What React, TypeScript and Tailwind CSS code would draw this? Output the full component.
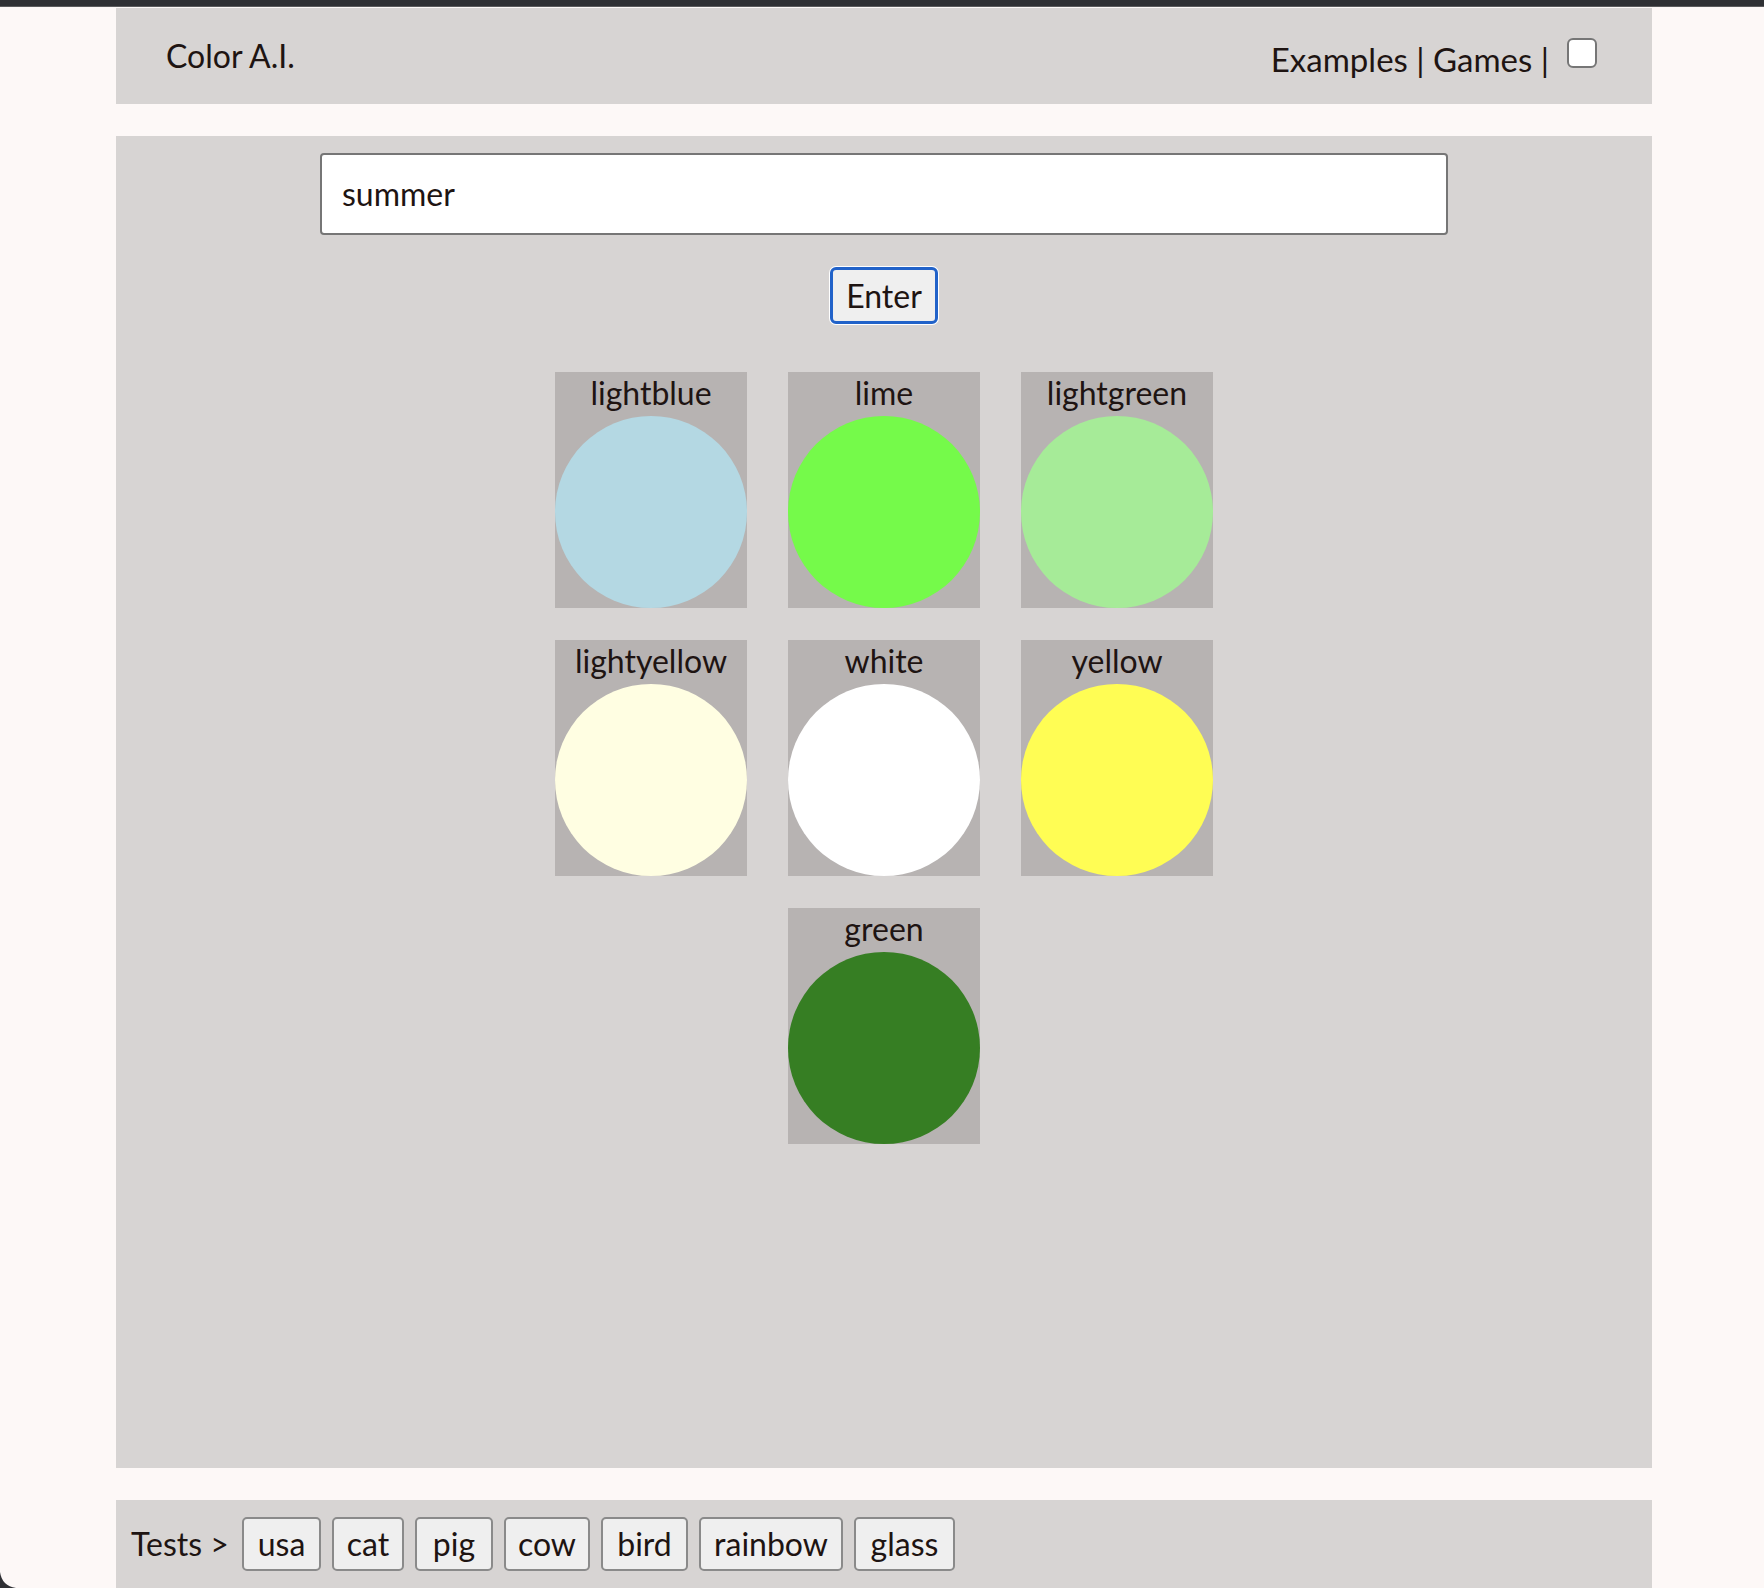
import React from "react";

const colors: { name: string; hex: string; col?: string }[] = [
  { name: "lightblue", hex: "#b4d8e3" },
  { name: "lime", hex: "#75fa4a" },
  { name: "lightgreen", hex: "#a6eb98" },
  { name: "lightyellow", hex: "#fffee2" },
  { name: "white", hex: "#ffffff" },
  { name: "yellow", hex: "#fffd54" },
  { name: "green", hex: "#367e23", col: "col-start-2" },
];

const tests: { label: string; w: string }[] = [
  { label: "usa", w: "w-[79px]" },
  { label: "cat", w: "w-[72px]" },
  { label: "pig", w: "w-[78px]" },
  { label: "cow", w: "w-[86px]" },
  { label: "bird", w: "w-[87px]" },
  { label: "rainbow", w: "w-[144px]" },
  { label: "glass", w: "w-[101px]" },
];

export default function App() {
  return (
    <div
      className="relative min-h-[1588px] w-full bg-[#fdf8f7] text-[#1e1412] text-[32px] leading-[38px]"
      style={{ fontFamily: "Lato, 'Liberation Sans', sans-serif" }}
    >
      <div className="h-[6px] w-full bg-[#2f3034]" />
      <div className="h-[1px] w-full bg-[#5b5b5d]" />
      <div className="h-[1px]" />

      <div className="ml-[116px] flex w-[1536px] flex-col">
        {/* Header */}
        <header className="flex h-[96px] items-start justify-between bg-[#d7d4d3]">
          <div className="pl-[50px] pt-[29px]">Color A.I.</div>
          <div className="flex items-start pr-[55px] pt-[30px]">
            <span className="pt-[2px] text-[33px]">Examples | Games |</span>
            <span className="ml-[18px] h-[30px] w-[30px] rounded-[6px] border-2 border-[#767676] bg-white" />
          </div>
        </header>

        {/* Main */}
        <main className="mt-[32px] flex h-[1332px] flex-col items-center bg-[#d7d4d3] pt-[17px]">
          <input
            readOnly
            value="summer"
            className="h-[82px] w-[1128px] rounded-[4px] border-2 border-[#767676] bg-white px-[20px] pb-[2px] text-[32px] text-[#1e1412] outline-none"
            style={{ fontFamily: "Lato, 'Liberation Sans', sans-serif" }}
          />
          <button className="mt-[32px] flex h-[57px] w-[108px] items-center justify-center rounded-[6px] border-[3px] border-[#2162c9] bg-[#efefef] text-[32px] shadow-[0_0_0_1px_#ffffff]">
            Enter
          </button>

          <div className="mt-[48px] grid grid-cols-[192px_192px_192px] gap-x-[41px] gap-y-[32px]">
            {colors.map((c) => (
              <div key={c.name} className={`flex h-[236px] w-[192px] flex-col items-center bg-[#b7b3b2] ${c.col ?? ""}`}>
                <div className="h-[44px] whitespace-nowrap pt-[2px] text-center leading-[38px]">{c.name}</div>
                <div className="h-[192px] w-[192px] rounded-full" style={{ backgroundColor: c.hex }} />
              </div>
            ))}
          </div>
        </main>

        {/* Footer */}
        <footer className="mt-[32px] flex h-[88px] items-center bg-[#d7d4d3] pl-[15px]">
          <span className="w-[111px] whitespace-nowrap">Tests &gt;</span>
          <div className="flex gap-[11px]">
            {tests.map((t) => (
              <button
                key={t.label}
                className={`flex h-[54px] ${t.w} items-center justify-center rounded-[5px] border-2 border-[#8a8a8a] bg-[#efefef] text-[32px] leading-[38px]`}
              >
                {t.label}
              </button>
            ))}
          </div>
        </footer>
      </div>

      {/* window corner */}
      <svg className="absolute bottom-0 left-0" width="16" height="16" viewBox="0 0 16 16">
        <path d="M0 0 L0 16 L16 16 Q2 14 0 0 Z" fill="#2f3034" />
      </svg>
    </div>
  );
}
